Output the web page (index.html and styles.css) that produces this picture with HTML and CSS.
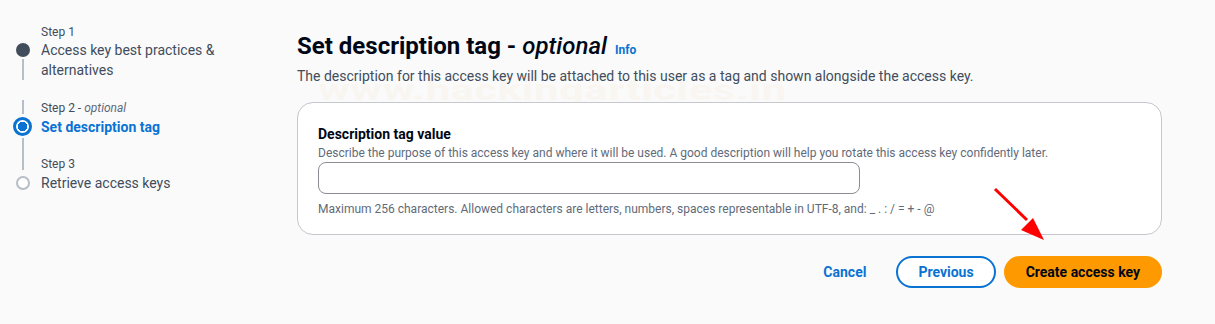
FILE: index.html
```html
<!DOCTYPE html>
<html lang="en">
<head>
<meta charset="utf-8">
<title>Set description tag</title>
<link rel="stylesheet" href="styles.css">
</head>
<body>
<div class="page">
  <nav class="steps">
    <div class="step first done">
      <div class="rail rail-top"></div>
      <div class="step-label">Step 1</div>
      <div class="marker"><span class="dot dot-done"></span><span class="line"></span></div>
      <div class="step-title">Access key best practices &amp; alternatives</div>
      <div class="rail rail-gap"></div>
    </div>
    <div class="step current">
      <div class="rail rail-top"><span class="line"></span></div>
      <div class="step-label">Step 2 - <i>optional</i></div>
      <div class="marker"><span class="dot dot-current"></span><span class="line"></span></div>
      <div class="step-title active">Set description tag</div>
      <div class="rail rail-gap"><span class="line"></span></div>
    </div>
    <div class="step last">
      <div class="rail rail-top"><span class="line"></span></div>
      <div class="step-label">Step 3</div>
      <div class="marker"><span class="dot dot-todo"></span></div>
      <div class="step-title">Retrieve access keys</div>
    </div>
  </nav>

  <main class="main">
    <div class="watermark">www.hackingarticles.in</div>
    <h1 class="title"><span>Set description tag - <i>optional</i></span> <a class="info" href="#">Info</a></h1>
    <p class="subtitle">The description for this access key will be attached to this user as a tag and shown alongside the access key.</p>

    <section class="card">
      <label class="field-label" for="desc">Description tag value</label>
      <div class="field-desc">Describe the purpose of this access key and where it will be used. A good description will help you rotate this access key confidently later.</div>
      <input id="desc" class="input" type="text">
      <div class="field-hint">Maximum 256 characters. Allowed characters are letters, numbers, spaces representable in UTF-8, and: _ . : / = + - @</div>
    </section>

    <div class="actions">
      <button class="btn btn-link">Cancel</button>
      <button class="btn btn-normal">Previous</button>
      <button class="btn btn-primary">Create access key</button>
    </div>

    <svg class="arrow" width="70" height="60" viewBox="0 0 70 60">
      <line x1="4" y1="4" x2="36" y2="35" stroke="#ff0000" stroke-width="3"/>
      <polygon points="53,55 30,45 42,33" fill="#ff0000"/>
    </svg>
  </main>
</div>
</body>
</html>
```

FILE: styles.css
```css
* { box-sizing: border-box; }

html, body {
  margin: 0;
  padding: 0;
  background: #fafafa;
  font-family: Roboto, "Open Sans", Arial, sans-serif;
  color: #000716;
}

.page {
  display: flex;
  padding-top: 24px;
  width: 1215px;
  height: 324px;
  overflow: hidden;
}

/* ---------- Steps nav ---------- */
.steps {
  width: 297px;
  flex: none;
  padding-left: 13px;
}

.step {
  display: grid;
  grid-template-columns: 19px 1fr;
  column-gap: 9px;
}

.rail, .marker {
  grid-column: 1;
  display: flex;
  flex-direction: column;
  align-items: center;
}
.rail-top { grid-row: 1; }
.step-label { grid-column: 2; grid-row: 1; }
.marker { grid-row: 2; }
.step-title { grid-column: 2; grid-row: 2; }
.rail-gap { grid-row: 3; height: 20px; }
.step.current .rail-gap { height: 18px; }

.line {
  flex: 1;
  width: 2px;
  background: #b6bec9;
  margin: 2px 0;
}
.rail-top .line { margin-bottom: 2px; margin-top: 0; }
.rail-gap .line { margin: 0; }
.marker .line { margin-bottom: 0; }

.step-label {
  font-size: 12px;
  line-height: 16px;
  color: #414d5c;
}
.step-label i { color: #5f6b7a; }

.step-title {
  font-size: 14px;
  line-height: 20px;
  color: #414d5c;
  padding-right: 30px;
  padding-top: 1px;
}
.step.first .step-title { padding-top: 0; }
.step-title.active {
  color: #0972d3;
  font-weight: 700;
}

.dot {
  display: block;
  border-radius: 50%;
  flex: none;
}
.dot-done {
  width: 14px;
  height: 14px;
  margin-top: 3px;
  background: #414d5c;
  border: 2px solid #414d5c;
}
.dot-current {
  width: 19px;
  height: 19px;
  margin-top: 1px;
  border: 3px solid #0972d3;
  background: radial-gradient(circle, #0972d3 0 4.5px, #ffffff 5px);
}
.dot-todo {
  width: 14px;
  height: 14px;
  margin-top: 4px;
  border: 2px solid #b6bec9;
  background: #ffffff;
}

/* ---------- Main ---------- */
.main {
  position: relative;
  width: 865px;
  flex: none;
}

.watermark {
  position: absolute;
  left: 21px;
  top: 51px;
  font-size: 30px;
  line-height: 30px;
  font-weight: 900;
  color: rgba(240, 190, 130, 0.06);
  white-space: nowrap;
  transform: scaleX(1.48);
  transform-origin: left center;
  pointer-events: none;
  z-index: 0;
}

.title {
  position: relative;
  margin: 7px 0 0;
  display: flex;
  align-items: baseline;
  gap: 8px;
  font-size: 24px;
  line-height: 30px;
  font-weight: 700;
  color: #000716;
}
.title i { font-weight: 500; }
.info {
  font-size: 12px;
  line-height: 16px;
  font-weight: 700;
  color: #0972d3;
  text-decoration: none;
}

.subtitle {
  position: relative;
  margin: 5px 0 0;
  font-size: 14px;
  line-height: 20px;
  color: #414d5c;
}

.card {
  position: relative;
  margin-top: 16px;
  background: #ffffff;
  border: 1px solid #c6c6cd;
  border-radius: 16px;
  padding: 21px 20px 17px;
  display: flex;
  flex-direction: column;
  align-items: flex-start;
}

.field-label {
  font-size: 14px;
  line-height: 20px;
  font-weight: 700;
  color: #000716;
}
.field-desc, .field-hint {
  font-size: 12px;
  line-height: 16px;
  color: #5f6b7a;
}
.field-desc { margin-top: 1px; }
.input {
  margin-top: 1px;
  width: 542px;
  height: 32px;
  border: 1px solid #8c8c94;
  border-radius: 8px;
  background: #ffffff;
  font: inherit;
  padding: 4px 12px;
}
.field-hint { margin-top: 7px; }

.actions {
  position: relative;
  margin-top: 21px;
  display: flex;
  justify-content: flex-end;
  align-items: center;
  gap: 8px;
}

.btn {
  font-family: inherit;
  font-size: 14px;
  font-weight: 700;
  line-height: 20px;
  height: 32px;
  border-radius: 20px;
  padding: 4px 20px;
  cursor: pointer;
}
.btn-link {
  background: transparent;
  border: 2px solid transparent;
  color: #0972d3;
}
.btn-normal {
  background: #ffffff;
  border: 2px solid #0972d3;
  color: #0972d3;
}
.btn-primary {
  background: #ff9900;
  border: 2px solid #ff9900;
  color: #000716;
}

.arrow {
  position: absolute;
  left: 694px;
  top: 161px;
  z-index: 2;
}
```
